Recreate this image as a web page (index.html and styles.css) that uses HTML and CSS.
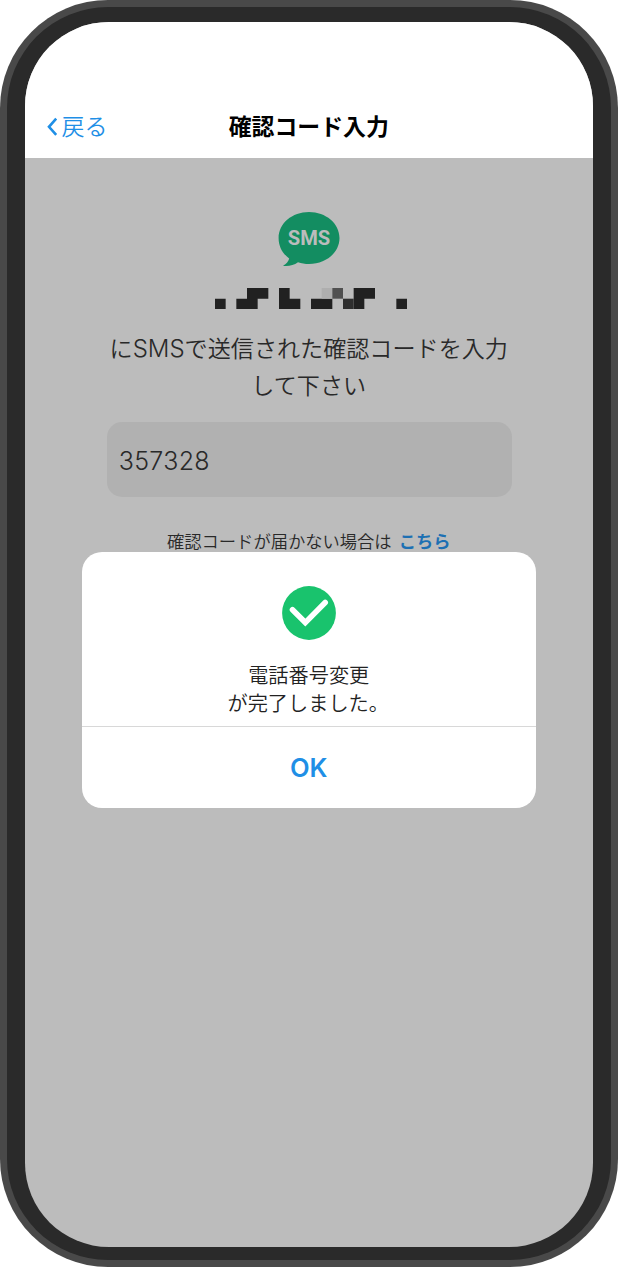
FILE: index.html
```html
<!DOCTYPE html>
<html lang="ja">
<head>
<meta charset="utf-8">
<title>確認コード入力</title>
<link rel="stylesheet" href="styles.css">
</head>
<body>
<div class="phone">
  <div class="bezel">
    <div class="screen">
      <header class="nav">
        <a class="back"><svg width="11" height="20" viewBox="0 0 11 20"><path d="M9.2 1.7 2 9.8 9.2 17.9" fill="none" stroke="#1f8fe6" stroke-width="2.6"/></svg><span class="nav-text">戻る</span></a>
        <h1 class="title nav-text">確認コード入力</h1>
      </header>
      <main class="content">
        <svg class="bubble" width="62" height="56" viewBox="0 0 62 56">
          <path d="M31 0C47.8 0 61.500 11.4 61.500 26S47.8 52 31 52c-3.9 0-7.600-.6-11-1.800C15.800 53.400 10.500 54.400 5 53.800c3.500-2 5.500-4.300 6.200-7.300C4.500 41.600.6 34.500.6 26 .6 11.400 14.200 0 31 0z" fill="#138d61"/>
          <text class="bubble-text" x="31" y="33.300" text-anchor="middle" textLength="42.500" lengthAdjust="spacingAndGlyphs">SMS</text>
        </svg>
        <svg class="masked" width="192" height="21.400" viewBox="0 0 18 2" preserveAspectRatio="none">
          <path d="M0 1h1v1H0zM2 1h1V0h2v1H4v1H2zM6 0h1v1h1v1H6zM9 1h2v1H9zM13 0h2v1h-1v1h-1zM17 1h1v1h-1z" fill="#212121"/>
          <path d="M10 0h1v1h-1z" fill="#aeaeae"/>
          <path d="M11 0h1v1h-1z" fill="#505050"/>
          <path d="M12 1h1v1h-1z" fill="#2f2f2f"/>
        </svg>
        <p class="lead">に<span class="lead-sms">SMS</span>で送信された確認コードを入力<br>して下さい</p>
        <div class="field">357328</div>
        <p class="help">確認コードが届かない場合は<a class="help-link">こちら</a></p>
      </main>
      <div class="dialog">
        <div class="dialog-body">
          <svg class="check" width="54" height="54" viewBox="0 0 54 54"><circle cx="27" cy="27" r="26.900" fill="#19c36d"/><path d="M10.500 23.800 23.300 36.600 43.200 16.500" fill="none" stroke="#fff" stroke-width="5.600" stroke-linecap="round"/></svg>
          <p class="message">電話番号変更<br><span class="message-end">が完了しました。</span></p>
        </div>
        <div class="dialog-action">OK</div>
      </div>
    </div>
  </div>
</div>
</body>
</html>
```
FILE: styles.css
```css
* { box-sizing: border-box; }
body { margin: 0; background: #fff; font-family: "Noto Sans CJK JP", sans-serif; }
p, h1 { margin: 0; }
svg { display: block; }
.phone { width: 617.5px; height: 1266.5px; padding: 7px; border-radius: 108px; background: #494949; }
.bezel { height: 100%; padding: 15px 17.5px 12.500px; border-radius: 101px; background: #2a2a2a; }
.screen { position: relative; height: 1225px; border-radius: 84px; overflow: hidden; background: #bcbcbc; }
.nav { display: grid; grid-template-columns: 1fr auto 1fr; align-items: center; height: 136px; padding: 73px 0 0; background: #fff; }
.nav-text { padding-bottom: 3px; }
.back { display: flex; align-items: center; gap: 4px; padding-left: 22px; color: #1f8fe6; font-size: 23px; font-weight: 350; line-height: 34px; }
.title { font-size: 22.900px; font-weight: 700; line-height: 34px; color: #000; }
.content { display: flex; flex-direction: column; align-items: center; padding-top: 54px; color: #292929; }
.bubble-text { font-family: Roboto, sans-serif; font-size: 20.500px; font-weight: 700; fill: #bcbcbc; }
.masked { margin: 20px 0 0 4px; }
.lead { margin-top: 20px; font-size: 23.100px; line-height: 37px; font-weight: 350; text-align: center; white-space: nowrap; }
.lead-sms { font-family: Inter, sans-serif; font-weight: 300; font-size: 24px; line-height: 1; }
.field { width: 405px; height: 75px; margin: 18.600px 0 0 1px; padding-left: 12px; border-radius: 15px; background: #b1b1b1; font: 350 25px/79px Inter, sans-serif; letter-spacing: .3px; }
.help { margin-top: 31px; font-size: 17.300px; line-height: 26px; font-weight: 350; white-space: nowrap; }
.help-link { margin-left: 7px; color: #1d70b3; font-weight: 700; }
.dialog { position: absolute; top: 529.5px; left: 57px; width: 454.500px; height: 256px; border-radius: 20px; overflow: hidden; background: #fff; }
.dialog-body { display: flex; flex-direction: column; align-items: center; height: 175.5px; padding-top: 34.500px; border-bottom: 1px solid #d8d8d8; }
.message { margin-top: 20.500px; font-size: 20.200px; line-height: 28px; font-weight: 350; color: #222; text-align: center; }
.message-end { margin-right: 1px; }
.dialog-action { font: 600 25.500px/81px Inter, sans-serif; text-align: center; color: #1f8fe6; }
```
